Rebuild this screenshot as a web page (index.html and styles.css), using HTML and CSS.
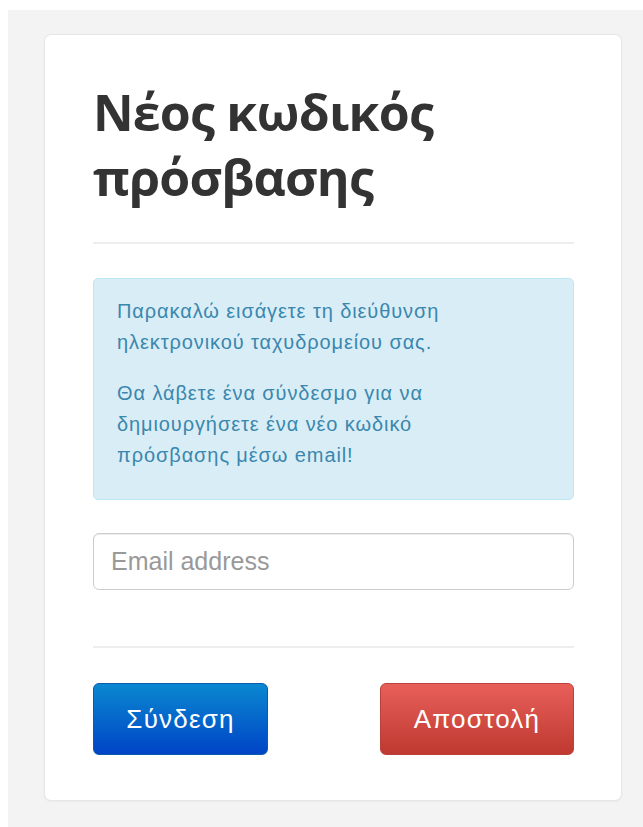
FILE: index.html
```html
<!DOCTYPE html>
<html lang="el">
<head>
<meta charset="utf-8">
<title>Νέος κωδικός πρόσβασης</title>
<link rel="stylesheet" href="styles.css">
</head>
<body>
  <div class="page">
    <form class="panel">
      <h1 class="panel-title">Νέος κωδικός πρόσβασης</h1>
      <hr class="rule">
      <div class="notice">
        <p>Παρακαλώ εισάγετε τη διεύθυνση ηλεκτρονικού ταχυδρομείου σας.</p>
        <p>Θα λάβετε ένα σύνδεσμο για να δημιουργήσετε ένα νέο κωδικό πρόσβασης μέσω email!</p>
      </div>
      <input class="field" type="email" placeholder="Email address">
      <hr class="rule rule-bottom">
      <div class="actions">
        <button type="button" class="btn btn-blue">Σύνδεση</button>
        <button type="submit" class="btn btn-red">Αποστολή</button>
      </div>
    </form>
  </div>
</body>
</html>
```

FILE: styles.css
```css
html, body {
  margin: 0;
  padding: 0;
  background: #ffffff;
}

body {
  padding: 10px 0 0 8px;
  font-family: "Liberation Sans", Arial, sans-serif;
}

.page {
  background: #f3f3f3;
  min-height: 817px;
  padding: 25px 22px 27px 37px;
  box-sizing: border-box;
}

.panel {
  background: #ffffff;
  width: 576px;
  height: 765px;
  box-sizing: border-box;
  padding: 45px 47px 0 48px;
  border-radius: 6px;
  box-shadow: 0 0 0 1px #e6e6e6, 0 1px 3px rgba(0, 0, 0, 0.08);
}

.panel-title {
  margin: 0;
  font-family: "Open Sans", sans-serif;
  font-weight: 700;
  font-size: 50px;
  line-height: 65px;
  color: #333333;
  letter-spacing: -0.8px;
}

.rule {
  border: 0;
  border-top: 2px solid #eeeeee;
  margin: 32px 0 34px;
}

.rule-bottom {
  margin: 56px 0 35px;
}

.notice {
  background: #d9edf7;
  border: 1px solid #bce8f1;
  border-radius: 5px;
  color: #3a87ad;
  font-size: 20px;
  letter-spacing: 0.9px;
  line-height: 31px;
  padding: 17px 22px 28px 23px;
  height: 222px;
  box-sizing: border-box;
}

.notice p {
  margin: 0;
  max-width: 390px;
}

.notice p + p {
  margin-top: 20px;
}

.field {
  display: block;
  width: 100%;
  height: 57px;
  box-sizing: border-box;
  margin-top: 33px;
  padding: 0 17px;
  border: 1px solid #cccccc;
  border-radius: 6px;
  font-family: "Liberation Sans", Arial, sans-serif;
  font-size: 25px;
  color: #555555;
  box-shadow: inset 0 1px 1px rgba(0, 0, 0, 0.075);
  background: #ffffff;
}

.field::placeholder {
  color: #999999;
}

.actions {
  display: flex;
  justify-content: space-between;
}

.btn {
  height: 72px;
  border: 0;
  border-radius: 6px;
  padding: 0;
  color: #ffffff;
  font-family: "Liberation Sans", Arial, sans-serif;
  font-size: 26px;
  letter-spacing: 1.2px;
  cursor: pointer;
}

.btn-blue {
  width: 175px;
  background: linear-gradient(to bottom, #0a88d0 0%, #0044c6 100%);
  border: 1px solid #0a5ab0;
}

.btn-red {
  width: 194px;
  background: linear-gradient(to bottom, #e85f5a 0%, #bf3930 100%);
  border: 1px solid #b8423a;
}
```
